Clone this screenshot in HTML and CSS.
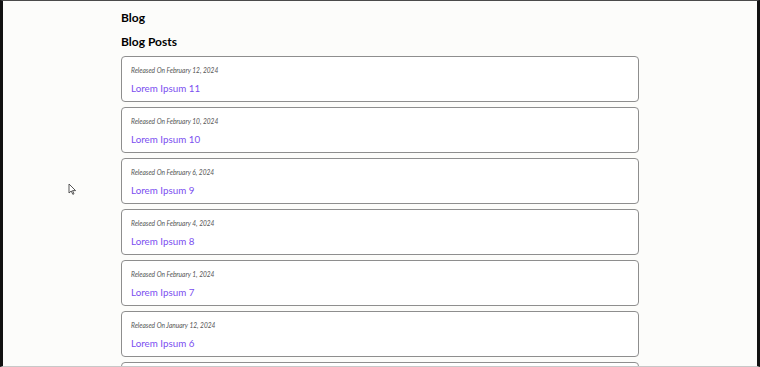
FILE: index.html
```html
<!DOCTYPE html>
<html>
<head>
<meta charset="utf-8">
<link rel="stylesheet" href="styles.css">
</head>
<body>
<div class="frame">
  <main class="page">
    <h1 class="site-title">Blog</h1>
    <h2 class="section-title">Blog Posts</h2>
    <div class="posts">
      <div class="card"><p class="date">Released On February 12, 2024</p><a class="title">Lorem Ipsum 11</a></div>
      <div class="card"><p class="date">Released On February 10, 2024</p><a class="title">Lorem Ipsum 10</a></div>
      <div class="card"><p class="date">Released On February 6, 2024</p><a class="title">Lorem Ipsum 9</a></div>
      <div class="card"><p class="date">Released On February 4, 2024</p><a class="title">Lorem Ipsum 8</a></div>
      <div class="card"><p class="date">Released On February 1, 2024</p><a class="title">Lorem Ipsum 7</a></div>
      <div class="card"><p class="date">Released On January 12, 2024</p><a class="title">Lorem Ipsum 6</a></div>
      <div class="card"></div>
    </div>
  </main>
  <svg class="cursor" width="9" height="12" viewBox="0 0 9 12"><path d="M1 1 L1 10 L3.2 8 L4.8 11.3 L6 10.8 L4.5 7.6 L7.6 7.6 Z" fill="#fff" stroke="#444" stroke-width="0.9" stroke-linejoin="round"/></svg>
</div>
</body>
</html>
```
FILE: styles.css
```css
html, body {
  margin: 0;
  padding: 0;
  height: 100%;
  overflow: hidden;
  background: #fcfcfa;
}
.frame {
  position: relative;
  box-sizing: border-box;
  height: 367px;
  width: 760px;
  border-top: 1px solid #4a4a4a;
  border-left: 3px solid #111;
  border-right: 3px solid #111;
  border-bottom: 1px solid #c8c8c8;
  background: #fcfcfa;
  overflow: hidden;
  font-family: Lato, "Noto Sans", sans-serif;
}
.page {
  width: 518px;
  margin-left: 118px;
  padding-top: 8px;
}
.site-title {
  margin: 0;
  font-size: 12px;
  font-weight: 700;
  line-height: 18px;
  color: #000;
}
.section-title {
  margin: 6px 0 0;
  font-size: 12px;
  font-weight: 700;
  line-height: 18px;
  color: #000;
}
.posts {
  margin-top: 5px;
  display: flex;
  flex-direction: column;
  gap: 5px;
}
.card {
  box-sizing: border-box;
  height: 46px;
  border: 1px solid #8e8e8e;
  border-radius: 4px;
  padding: 8px 9px 0;
  background: #fff;
}
.date {
  margin: 0;
  font-size: 6.6px;
  font-style: italic;
  line-height: 11px;
  color: #555;
}
.title {
  display: block;
  margin-top: 4px;
  font-size: 9.8px;
  line-height: 16px;
  color: #7b4ff0;
}
.cursor {
  position: absolute;
  left: 65px;
  top: 182px;
}
```
